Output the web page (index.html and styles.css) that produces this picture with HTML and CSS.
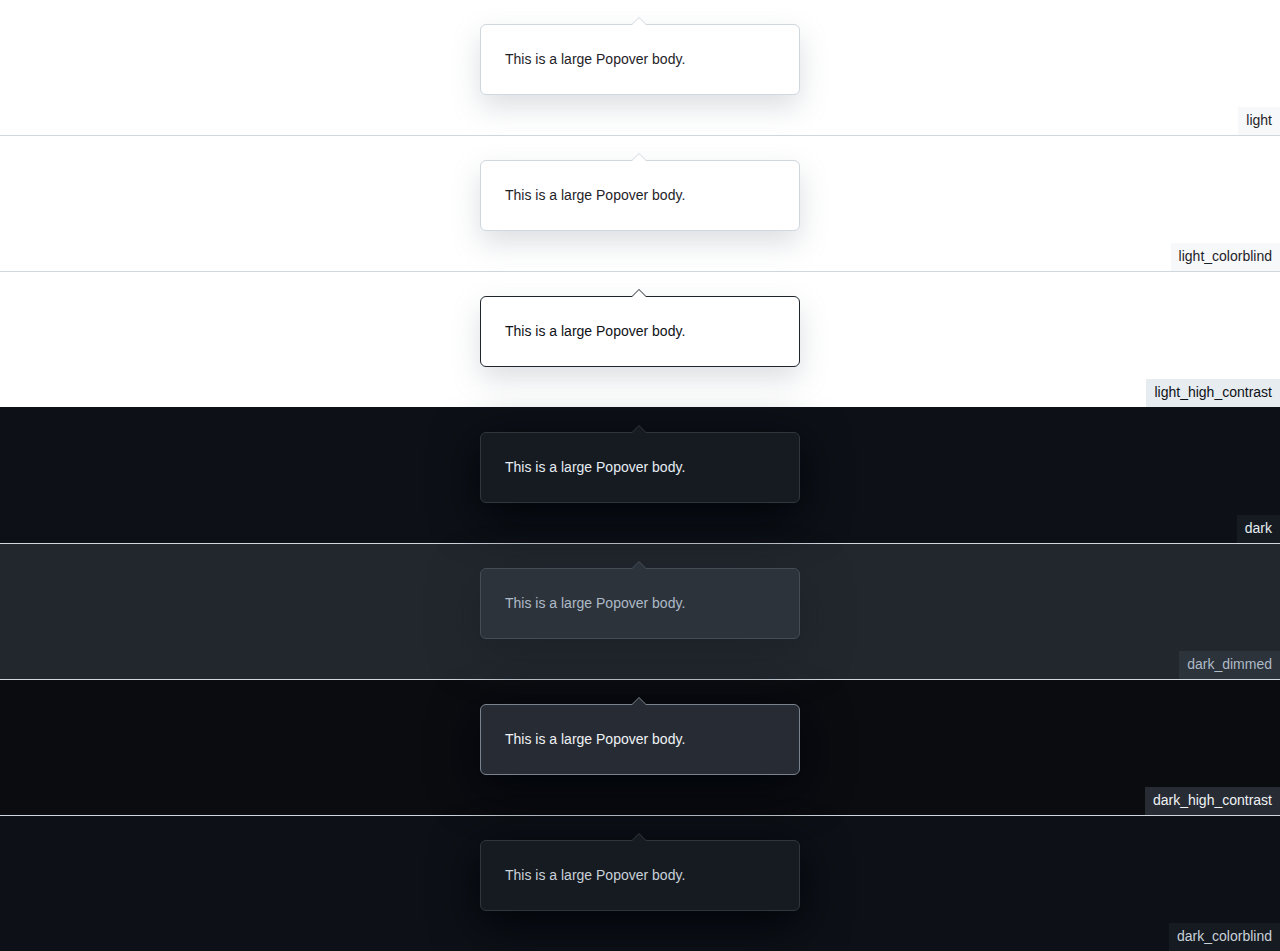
FILE: index.html
```html
<!DOCTYPE html>
<html lang="en">
<head>
<meta charset="utf-8">
<title>Popover</title>
<link rel="stylesheet" href="styles.css">
</head>
<body>
  <section class="theme light">
    <div class="popover"><p class="popover-body">This is a large Popover body.</p></div>
    <span class="theme-label">light</span>
  </section>
  <section class="theme light-cb">
    <div class="popover"><p class="popover-body">This is a large Popover body.</p></div>
    <span class="theme-label">light_colorblind</span>
  </section>
  <section class="theme light-hc">
    <div class="popover"><p class="popover-body">This is a large Popover body.</p></div>
    <span class="theme-label">light_high_contrast</span>
  </section>
  <section class="theme dark">
    <div class="popover"><p class="popover-body">This is a large Popover body.</p></div>
    <span class="theme-label">dark</span>
  </section>
  <section class="theme dark-dimmed">
    <div class="popover"><p class="popover-body">This is a large Popover body.</p></div>
    <span class="theme-label">dark_dimmed</span>
  </section>
  <section class="theme dark-hc">
    <div class="popover"><p class="popover-body">This is a large Popover body.</p></div>
    <span class="theme-label">dark_high_contrast</span>
  </section>
  <section class="theme dark-cb">
    <div class="popover"><p class="popover-body">This is a large Popover body.</p></div>
    <span class="theme-label">dark_colorblind</span>
  </section>
</body>
</html>
```

FILE: styles.css
```css
* { box-sizing: border-box; }
html, body { margin: 0; padding: 0; }
body {
  font-family: "Liberation Sans", Arial, sans-serif;
  font-size: 14px;
  line-height: 21px;
  overflow: hidden;
}

.theme {
  --bg: #ffffff;
  --fg: #1f2328;
  --pop-bg: #ffffff;
  --pop-border: #d0d7de;
  --shadow: 0 12px 28px rgba(140, 149, 159, 0.3);
  --label-bg: #f6f8fa;
  --label-fg: #1f2328;
  --sep: #d0d7de;
  height: 136px;
  padding-top: 24px;
  display: flex;
  flex-direction: column;
  background: var(--bg);
  border-bottom: 1px solid var(--sep);
}

.light-hc {
  --fg: #0e1116;
  --pop-border: #20252c;
  --label-bg: #e7ecf0;
  --label-fg: #0e1116;
  --sep: #0e1116;
}

.dark {
  --bg: #0d1117;
  --fg: #e6edf3;
  --pop-bg: #161b22;
  --pop-border: #30363d;
  --shadow: 0 12px 48px #010409;
  --label-bg: #161b22;
  --label-fg: #e6edf3;
  --sep: #d0d7de;
}

.dark-dimmed {
  --bg: #22272e;
  --fg: #adbac7;
  --pop-bg: #2d333b;
  --pop-border: #444c56;
  --shadow: 0 12px 48px #1c2128;
  --label-bg: #2d333b;
  --label-fg: #adbac7;
  --sep: #d0d7de;
}

.dark-hc {
  --bg: #0a0c10;
  --fg: #f0f3f6;
  --pop-bg: #272b33;
  --pop-border: #7a828e;
  --shadow: 0 12px 48px #010409;
  --label-bg: #272b33;
  --label-fg: #f0f3f6;
  --sep: #d0d7de;
}

.dark-cb {
  --bg: #0d1117;
  --fg: #c9d1d9;
  --pop-bg: #161b22;
  --pop-border: #30363d;
  --shadow: 0 12px 48px #010409;
  --label-bg: #161b22;
  --label-fg: #c9d1d9;
  --sep: #d0d7de;
}

.popover {
  position: relative;
  width: 320px;
  margin: 0 auto;
  background: var(--pop-bg);
  border: 1px solid var(--pop-border);
  border-radius: 6px;
  box-shadow: var(--shadow);
  color: var(--fg);
}

.popover::before,
.popover::after {
  content: "";
  position: absolute;
  left: 50%;
  border-style: solid;
  border-color: transparent;
}

.popover::before {
  top: -16px;
  margin-left: -9px;
  border-width: 8px;
  border-bottom-color: var(--pop-border);
}

.popover::after {
  top: -14px;
  margin-left: -8px;
  border-width: 7px;
  border-bottom-color: var(--pop-bg);
}

.popover-body {
  margin: 0;
  padding: 24px;
}

.theme-label {
  margin-top: auto;
  align-self: flex-end;
  padding: 3px 8px 5px;
  background: var(--label-bg);
  color: var(--label-fg);
  line-height: 20px;
}
```
